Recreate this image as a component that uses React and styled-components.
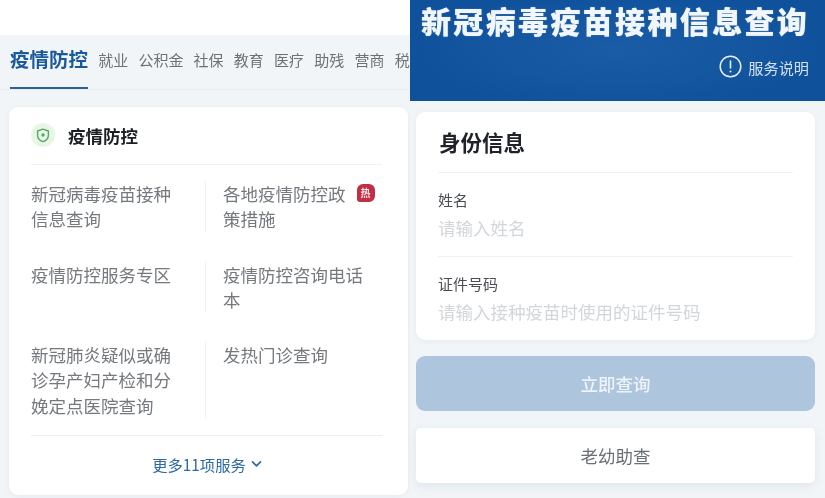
import React from 'react';
import styled, { createGlobalStyle } from 'styled-components';

const GlobalStyle = createGlobalStyle`
  html, body {
    margin: 0;
    padding: 0;
    background: #f1f5f8;
    overflow: hidden;
  }
  * {
    box-sizing: border-box;
  }
`;

const Page = styled.div`
  display: grid;
  grid-template-columns: 410px 415px;
  width: 825px;
  height: 498px;
  overflow: hidden;
  font-family: "Noto Sans CJK SC", "Liberation Sans", sans-serif;
  filter: blur(0.45px);
`;

const Panel = styled.section`
  display: flex;
  flex-direction: column;
  height: 498px;
  overflow: hidden;
  background: #f1f5f8;
`;

const TopBlank = styled.div`
  height: 35px;
  flex: none;
  background: #fff;
`;

const Tabs = styled.nav`
  display: flex;
  align-items: flex-start;
  gap: 10.2px;
  height: 55px;
  flex: none;
  padding-left: 10px;
  white-space: nowrap;
  overflow: hidden;
  border-bottom: 1px solid #e9edf1;
`;

const Tab = styled.div`
  flex: none;
  height: 55px;
  display: flex;
  align-items: center;
  padding-bottom: 6px;
  font-size: ${p => (p.$active ? '19.5px' : '15px')};
  font-weight: ${p => (p.$active ? 700 : 400)};
  color: ${p => (p.$active ? '#1a5a9c' : '#6d7176')};
  border-bottom: ${p => (p.$active ? '3px solid #2a619c' : '0')};
`;

const Card = styled.div`
  background: #fff;
  border-radius: 9px;
  box-shadow: 0 1px 5px rgba(120, 140, 160, 0.1);
`;

const ServiceCard = styled(Card)`
  flex: none;
  width: 399px;
  height: 388px;
  margin: 17px 0 0 9px;
  padding: 0 26px 0 22px;
`;

const CardHead = styled.div`
  display: flex;
  align-items: center;
  gap: 13px;
  height: 58px;
  padding-bottom: 1px;
  border-bottom: 1px solid #eff1f3;
`;

const IconDisc = styled.div`
  width: 24px;
  height: 24px;
  border-radius: 50%;
  background: #e8f6e6;
  display: flex;
  align-items: center;
  justify-content: center;
`;

const CardTitle = styled.div`
  font-size: 17.5px;
  font-weight: 700;
  color: #1c1f23;
`;

const ServiceGrid = styled.div`
  display: grid;
  grid-template-columns: 175px 1fr;
  row-gap: 30px;
  padding: 16px 0 17px;
  border-bottom: 1px solid #eceef0;
`;

const ServiceItem = styled.div`
  font-size: 17.5px;
  line-height: 25.3px;
  color: #75797e;
  ${p => (p.$right
    ? 'padding-left: 17px; width: 173px;'
    : 'border-right: 1px solid #f0f2f4; padding-right: 24px;')}
`;

const HotBadge = styled.span`
  display: inline-flex;
  align-items: center;
  justify-content: center;
  width: 18px;
  height: 18px;
  margin-left: 11px;
  vertical-align: 4px;
  border-radius: 6px 6px 6px 3px;
  background: #c22f45;
  color: #fbe6e8;
  font-size: 10px;
  line-height: 1;
  font-weight: 700;
`;

const More = styled.div`
  display: flex;
  align-items: center;
  justify-content: center;
  gap: 5px;
  height: 59px;
  padding: 0 0 3px 1px;
  font-size: 15.3px;
  color: #2b6aa5;
`;

const Banner = styled.header`
  height: 101px;
  flex: none;
  padding: 1px 16px 0 11px;
  background: radial-gradient(ellipse 210px 60px at 50% 50%, #1a5da6 0%, #10519c 100%);
  color: #fff;
`;

const BannerTitle = styled.h1`
  margin: 0;
  font-size: 30px;
  line-height: 38px;
  font-weight: 900;
  letter-spacing: 2.35px;
  white-space: nowrap;
  color: #f1f6fb;
  text-shadow: 0 0 1px rgba(241, 246, 251, 0.7);
`;

const BannerNote = styled.div`
  display: flex;
  align-items: center;
  justify-content: flex-end;
  gap: 6px;
  margin-top: 16px;
  font-size: 15.2px;
  color: #d3e0ee;
`;

const FormCard = styled(Card)`
  flex: none;
  width: 399px;
  height: 228px;
  margin: 11px 0 0 6px;
  padding: 0 22px;
`;

const FormHead = styled.div`
  display: flex;
  align-items: center;
  height: 61px;
  padding: 0 0 1px 1px;
  font-size: 21.5px;
  font-weight: 700;
  color: #1f2328;
  border-bottom: 1px solid #eff1f3;
`;

const Field = styled.div`
  height: 84px;
  padding-top: 16px;
  border-bottom: ${p => (p.$last ? '0' : '1px solid #eff1f3')};
`;

const FieldLabel = styled.div`
  font-size: 15px;
  line-height: 22px;
  color: #4a4e53;
`;

const FieldValue = styled.div`
  margin-top: 3px;
  font-size: 17.5px;
  line-height: 28px;
  color: #d2d6da;
`;

const Action = styled.div`
  flex: none;
  width: 399px;
  height: 55px;
  margin: ${p => (p.$primary ? '16px' : '17px')} 0 0 6px;
  display: flex;
  align-items: center;
  justify-content: center;
  border-radius: ${p => (p.$primary ? '9px' : '5px')};
  font-size: 17.5px;
  font-weight: ${p => (p.$primary ? 500 : 400)};
  background: ${p => (p.$primary ? '#aec5de' : '#fff')};
  color: ${p => (p.$primary ? '#eef3f8' : '#6b6f74')};
  box-shadow: ${p => (p.$primary ? 'none' : '0 3px 10px rgba(120, 140, 160, 0.14)')};
`;

const tabs = ['就业', '公积金', '社保', '教育', '医疗', '助残', '营商', '税务'];

const ShieldIcon = () => (
  <svg width="14" height="15" viewBox="0 0 14 15" fill="none">
    <path
      d="M7 1.2 12.4 3v4.2c0 3-2.2 5.3-5.4 6.5C3.8 12.5 1.6 10.2 1.6 7.2V3L7 1.2Z"
      stroke="#55a866"
      strokeWidth="1.4"
      strokeLinejoin="round"
    />
    <circle cx="7" cy="7" r="1.7" fill="#55a866" />
  </svg>
);

const InfoIcon = () => (
  <svg width="23" height="23" viewBox="0 0 23 23" fill="none">
    <circle cx="11.5" cy="11.5" r="10.3" stroke="#e6eef6" strokeWidth="1.5" />
    <path d="M11.5 6v7" stroke="#e6eef6" strokeWidth="1.6" strokeLinecap="round" />
    <circle cx="11.5" cy="16.5" r="1" fill="#e6eef6" />
  </svg>
);

const Chevron = () => (
  <svg width="11" height="8" viewBox="0 0 11 8" fill="none">
    <path d="M1.5 1.8 5.5 5.8 9.5 1.8" stroke="#2b6aa5" strokeWidth="1.7" strokeLinecap="round" strokeLinejoin="round" />
  </svg>
);

const App = () => (
  <>
    <GlobalStyle />
    <Page>
      <Panel>
        <TopBlank />
        <Tabs>
          <Tab $active>疫情防控</Tab>
          {tabs.map(t => <Tab key={t}>{t}</Tab>)}
        </Tabs>
        <ServiceCard>
          <CardHead>
            <IconDisc><ShieldIcon /></IconDisc>
            <CardTitle>疫情防控</CardTitle>
          </CardHead>
          <ServiceGrid>
            <ServiceItem>新冠病毒疫苗接种信息查询</ServiceItem>
            <ServiceItem $right>各地疫情防控政<HotBadge>热</HotBadge>策措施</ServiceItem>
            <ServiceItem>疫情防控服务专区</ServiceItem>
            <ServiceItem $right>疫情防控咨询电话本</ServiceItem>
            <ServiceItem>新冠肺炎疑似或确诊孕产妇产检和分娩定点医院查询</ServiceItem>
            <ServiceItem $right>发热门诊查询</ServiceItem>
          </ServiceGrid>
          <More>更多11项服务<Chevron /></More>
        </ServiceCard>
      </Panel>
      <Panel>
        <Banner>
          <BannerTitle>新冠病毒疫苗接种信息查询</BannerTitle>
          <BannerNote><InfoIcon />服务说明</BannerNote>
        </Banner>
        <FormCard>
          <FormHead>身份信息</FormHead>
          <Field>
            <FieldLabel>姓名</FieldLabel>
            <FieldValue>请输入姓名</FieldValue>
          </Field>
          <Field $last>
            <FieldLabel>证件号码</FieldLabel>
            <FieldValue>请输入接种疫苗时使用的证件号码</FieldValue>
          </Field>
        </FormCard>
        <Action $primary>立即查询</Action>
        <Action>老幼助查</Action>
      </Panel>
    </Page>
  </>
);

export default App;
